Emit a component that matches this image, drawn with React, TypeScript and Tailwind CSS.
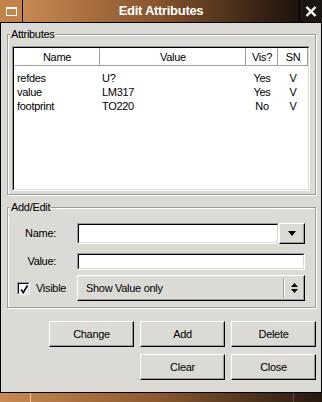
import React from 'react';

const raised =
  'border border-t-white border-l-white border-b-black border-r-black shadow-[inset_-1px_-1px_0_#9d9c97]';

const attributes = [
  { name: 'refdes', value: 'U?', vis: 'Yes', sn: 'V' },
  { name: 'value', value: 'LM317', vis: 'Yes', sn: 'V' },
  { name: 'footprint', value: 'TO220', vis: 'No', sn: 'V' },
];

function Inset({ className, children }: { className?: string; children?: React.ReactNode }) {
  return (
    <div className={`border border-t-[#9d9c97] border-l-[#9d9c97] border-b-white border-r-white ${className ?? ''}`}>
      <div className="h-full border border-t-black border-l-black border-b-[#dcdad5] border-r-[#dcdad5] bg-white">
        {children}
      </div>
    </div>
  );
}

function Frame({ title, className, children }: { title: string; className?: string; children: React.ReactNode }) {
  return (
    <div className={`flex flex-col ${className ?? ''}`}>
      <div className="relative z-10 -mb-[7px] ml-[3px] self-start bg-[#dcdad5] px-[1px] leading-[13px]">{title}</div>
      <div className="border border-[#9d9c97] shadow-[inset_1px_1px_0_#fff,1px_1px_0_#fff]">{children}</div>
    </div>
  );
}

function Button({ label }: { label: string }) {
  return (
    <button className={`h-[26px] w-[85px] bg-[#dcdad5] text-black ${raised}`}>{label}</button>
  );
}

function HeaderCell({ label, width }: { label: string; width: string }) {
  return (
    <div
      className={`${width} flex items-center justify-center border border-t-white border-l-white border-b-[#9d9c97] border-r-[#9d9c97]`}
    >
      {label}
    </div>
  );
}

export default function App() {
  return (
    <div className="flex h-[402px] w-[322px] flex-col overflow-hidden bg-[#dcdad5] font-['Liberation_Sans',Arial,sans-serif] text-[11px] tracking-[-0.3px] text-black">
      {/* title bar */}
      <div className="flex h-[23px] border-b border-black">
        <div className="flex w-[23px] items-center justify-center border-r border-black bg-[#c3834a]">
          <div className="h-[9px] w-[11px] border border-t-2 border-white" />
        </div>
        <div className="flex flex-1 items-center justify-center border-r border-black bg-linear-to-r from-[#c98a51] via-[#85532c] to-[#1d130c] text-[13px] font-bold text-white">
          Edit Attributes
        </div>
        <div className="flex w-[22px] items-center justify-center bg-[#1c1612]">
          <svg width="12" height="11" viewBox="0 0 12 11">
            <path d="M1.5 1 L10.5 10 M10.5 1 L1.5 10" stroke="#fff" strokeWidth="2.4" />
          </svg>
        </div>
      </div>

      {/* body */}
      <div className="flex flex-1 flex-col border-x border-black pl-[6px] pr-[5px] pt-[5px]">
        <Frame title="Attributes">
          <div className="px-[4px] pb-[3px] pr-[5px] pt-[11px]">
            <Inset className="h-[145px]">
              <div className="flex h-[18px]">
                <HeaderCell label="Name" width="w-[86px]" />
                <HeaderCell label="Value" width="w-[146px]" />
                <HeaderCell label="Vis?" width="w-[32px]" />
                <HeaderCell label="SN" width="w-[30px]" />
              </div>
              <div className="pt-[5px]">
                {attributes.map((a) => (
                  <div key={a.name} className="flex h-[14px] items-center leading-[14px]">
                    <div className="w-[86px] pl-[3px]">{a.name}</div>
                    <div className="w-[146px] pl-[2px]">{a.value}</div>
                    <div className="w-[32px] text-center">{a.vis}</div>
                    <div className="w-[30px] text-center">{a.sn}</div>
                  </div>
                ))}
              </div>
            </Inset>
          </div>
        </Frame>

        <Frame title="Add/Edit" className="mt-[6px]">
          <div className="flex flex-col pb-[6px] pr-[10px] pt-[15px]">
            <div className="flex h-[21px] items-center">
              <div className="w-[69px] pr-[21px] text-right">Name:</div>
              <Inset className="h-[21px] flex-1" />
              <div className={`flex h-[21px] w-[26px] items-center justify-center bg-[#dcdad5] ${raised}`}>
                <svg width="8" height="5" viewBox="0 0 8 5">
                  <path d="M0 0 H8 L4 5 Z" fill="#000" />
                </svg>
              </div>
            </div>
            <div className="mt-[9px] flex h-[17px] items-center">
              <div className="w-[69px] pr-[21px] text-right">Value:</div>
              <Inset className="h-[17px] flex-1" />
            </div>
            <div className="mt-[5px] flex h-[26px] items-center">
              <div className="flex w-[69px] items-center pl-[9px]">
                <Inset className="h-[13px] w-[13px]">
                  <svg width="11" height="11" viewBox="0 0 11 11" className="block">
                    <path d="M2 5.5 L4.3 8.5 L8.5 1.5" stroke="#000" strokeWidth="1.6" fill="none" />
                  </svg>
                </Inset>
                <span className="ml-[6px]">Visible</span>
              </div>
              <div className={`flex h-[26px] flex-1 items-center bg-[#dcdad5] pl-[8px] ${raised}`}>
                <span className="flex-1">Show Value only</span>
                <div className="h-[20px] w-[2px] border-l border-r border-l-[#9d9c97] border-r-white" />
                <div className="flex w-[19px] flex-col items-center gap-[2px]">
                  <svg width="7" height="4" viewBox="0 0 7 4">
                    <path d="M3.5 0 L7 4 H0 Z" fill="#000" />
                  </svg>
                  <svg width="7" height="4" viewBox="0 0 7 4">
                    <path d="M0 0 H7 L3.5 4 Z" fill="#000" />
                  </svg>
                </div>
              </div>
            </div>
          </div>
        </Frame>

        <div className="mt-[13px] flex flex-col items-end gap-[7px] pr-[0px]">
          <div className="flex gap-[6px]">
            <Button label="Change" />
            <Button label="Add" />
            <Button label="Delete" />
          </div>
          <div className="flex gap-[6px]">
            <Button label="Clear" />
            <Button label="Close" />
          </div>
        </div>
      </div>

      {/* bottom frame */}
      <div className="flex h-[10px] border-t border-black bg-linear-to-r from-[#c98a51] via-[#8a582f] to-[#24180f]">
        <div className="w-[30px]" />
        <div className="w-px bg-[#f2c08e]" />
        <div className="flex-1" />
        <div className="w-px bg-[#6b4a30]" />
        <div className="w-[28px]" />
      </div>
    </div>
  );
}
